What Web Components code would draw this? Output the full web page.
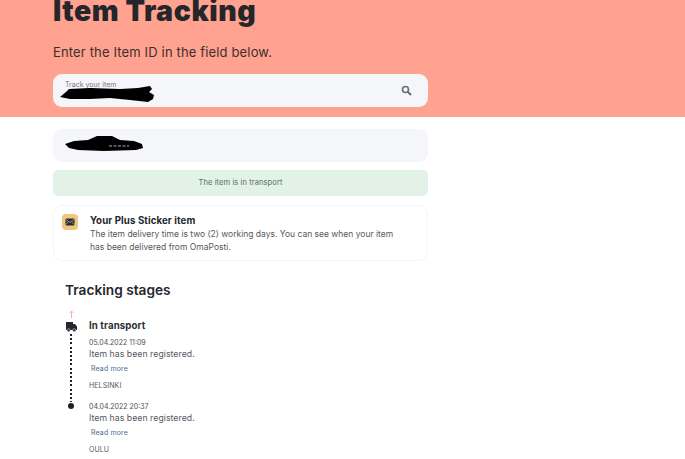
<!DOCTYPE html>
<html lang="en">
<head>
<meta charset="utf-8">
<title>Item Tracking</title>
<style>
  html, body { margin: 0; height: 459px; overflow: hidden; background: #fff; }
  body { font-family: Inter, "Liberation Sans", sans-serif; color: #22252b; }
</style>
</head>
<body>
<track-hero>
  <span slot="title">Item Tracking</span>
  <span slot="lead">Enter the Item ID in the field below.</span>
  <search-field label="Track your item"></search-field>
</track-hero>
<page-column>
  <id-card></id-card>
  <status-banner>The item is in transport</status-banner>
  <info-card heading="Your Plus Sticker item">The item delivery time is two (2) working days. You can see when your item has been delivered from OmaPosti.</info-card>
  <tracking-stages heading="Tracking stages">
    <tracking-stage current status="In transport" date="05.04.2022 11:09" place="HELSINKI">Item has been registered.</tracking-stage>
    <tracking-stage date="04.04.2022 20:37" place="OULU">Item has been registered.</tracking-stage>
  </tracking-stages>
</page-column>

<script>
// hero bar at the top, the title sits right under the window edge
class TrackHero extends HTMLElement {
  constructor() {
    super();
    this.attachShadow({ mode: 'open' }).innerHTML = `
      <style>
        :host { display: block; background: #ffa28f; height: 117px; overflow: hidden; padding: 0 53px; box-sizing: border-box; }
        .title { margin: 0; font: 900 28.5px/22px Inter, sans-serif; color: #25262b; letter-spacing: .55px; }
        .lead { margin: 21px 0 0; font: 400 13px/18px Inter, sans-serif; color: #3b2f2e; letter-spacing: .15px; }
        .box { margin-top: 13px; width: 375px; }
      </style>
      <h1 class="title"><slot name="title"></slot></h1>
      <p class="lead"><slot name="lead"></slot></p>
      <div class="box"><slot></slot></div>`;
  }
}

// search field with the blacked out value
class SearchField extends HTMLElement {
  constructor() {
    super();
    this.attachShadow({ mode: 'open' }).innerHTML = `
      <style>
        :host { display: flex; align-items: center; justify-content: flex-end; position: relative; height: 33px; background: #f5f6f9; border-radius: 9px; padding-right: 16px; box-sizing: border-box; }
        .label { position: absolute; left: 12px; top: 6px; font: 400 7px/9px Inter, sans-serif; color: #77787c; }
        .mark { position: absolute; left: 7px; top: 11px; }
      </style>
      <span class="label">${this.getAttribute('label')}</span>
      <svg class="mark" width="95" height="18" viewBox="0 0 95 18"><path fill="#000" d="M0 12 6 7 9 4 30 3 60 4 78 3 90 1 92 4 89 7 94 10 93 14 88 17 70 15 50 13 30 14 10 14Z"/></svg>
      <svg width="11" height="11" viewBox="0 0 11 11" fill="none" stroke="#666b75"><circle cx="4.5" cy="4.5" r="3" stroke-width="1.6"/><path d="M7 7l3 3" stroke-width="2"/></svg>`;
  }
}

class PageColumn extends HTMLElement {
  constructor() {
    super();
    this.attachShadow({ mode: 'open' }).innerHTML = `
      <style>
        :host { display: flex; flex-direction: column; width: 375px; margin: 12px 0 0 53px; }
      </style>
      <slot></slot>`;
  }
}

class IdCard extends HTMLElement {
  constructor() {
    super();
    this.attachShadow({ mode: 'open' }).innerHTML = `
      <style>
        :host { display: block; position: relative; height: 33px; background: #f5f6f9; border-radius: 9px; }
        svg { position: absolute; left: 11px; top: 5px; }
      </style>
      <svg width="80" height="18" viewBox="0 0 80 18"><path fill="#000" d="M1 10 10 7 24 6 33 2 48 2 56 6 70 7 78 10 79 14 72 16 40 17 14 16 5 14Z"/><path stroke="#fff" stroke-width=".7" stroke-dasharray="3 1.5" d="M45 12H65"/></svg>`;
  }
}

class StatusBanner extends HTMLElement {
  constructor() {
    super();
    this.attachShadow({ mode: 'open' }).innerHTML = `
      <style>
        :host { display: flex; align-items: center; justify-content: center; height: 26px; margin-top: 8px; background: #e2f2e6; border-radius: 5px; font: 400 7.5px/10px Inter, sans-serif; color: #4f6e60; letter-spacing: .1px; }
      </style>
      <slot></slot>`;
  }
}

class InfoCard extends HTMLElement {
  constructor() {
    super();
    this.attachShadow({ mode: 'open' }).innerHTML = `
      <style>
        :host { display: flex; gap: 12px; height: 56px; margin-top: 9px; padding: 8px 8px 0; box-sizing: border-box; border: 1px solid #f6f6f8; border-radius: 9px; }
        .icon { flex: none; display: flex; align-items: center; justify-content: center; width: 16px; height: 16px; background: #f1c77f; border-radius: 4px; }
        h3 { margin: 0 0 1px; font: 700 9.7px/13px Inter, sans-serif; color: #25272c; letter-spacing: .1px; }
        p { margin: 0; width: 312px; font: 400 8.5px/12.5px Inter, sans-serif; color: #55585e; }
      </style>
      <div class="icon">
        <svg width="10" height="8" viewBox="0 0 10 8"><rect x=".5" y=".5" width="9" height="7" rx="1" fill="#2b2d35"/><path d="M1 1.5 5 4.5 9 1.5M1 6.5 3.5 3.5M9 6.5 6.5 3.5" fill="none" stroke="#d9c8a4" stroke-width=".6"/></svg>
      </div>
      <div>
        <h3>${this.getAttribute('heading')}</h3>
        <p><slot></slot></p>
      </div>`;
  }
}

class TrackingStages extends HTMLElement {
  constructor() {
    super();
    this.attachShadow({ mode: 'open' }).innerHTML = `
      <style>
        :host { display: block; padding: 20px 0 0 12px; }
        h2 { margin: 0 0 13px; font: 600 13.7px/18px Inter, sans-serif; color: #25272c; }
      </style>
      <h2>${this.getAttribute('heading')}</h2>
      <slot></slot>`;
  }
}

// one row of the timeline, the first one has the truck and the status
class TrackingStage extends HTMLElement {
  constructor() {
    super();
    const current = this.hasAttribute('current');
    const status = this.getAttribute('status');
    this.attachShadow({ mode: 'open' }).innerHTML = `
      <style>
        :host { display: grid; grid-template-columns: 12px 1fr; column-gap: 12px; }
        .rail { display: flex; flex-direction: column; align-items: center; }
        .arrow { display: block; margin: -2px 0 4px; }
        .truck { display: block; }
        .line { flex: 1; margin-top: 2px; width: 2px; background: repeating-linear-gradient(#1d1f25 0 2px, transparent 2px 4.2px); }
        .dot { width: 6px; height: 6px; margin-top: 1px; border-radius: 50%; background: #1d1f25; }
        .status { margin: 7px 0 5px; font: 700 9.7px/14px Inter, sans-serif; color: #2c3038; letter-spacing: .1px; }
        .date { font: 400 7px/9px Inter, sans-serif; color: #4c4f55; }
        .msg { margin-top: 1px; font: 400 8.7px/12px Inter, sans-serif; color: #55585e; letter-spacing: .05px; }
        a { display: block; margin: 3.5px 0 0 2px; font: 400 7px/10px Inter, sans-serif; color: #4d6a8e; letter-spacing: .15px; }
        .place { margin-top: 7.5px; font: 400 7px/9px Inter, sans-serif; color: #55585e; letter-spacing: .1px; }
        .body { padding-bottom: 12px; }
      </style>
      <div class="rail">
        ${current ? `
          <svg class="arrow" width="5" height="8" viewBox="0 0 5 8"><path d="M2.5 8V1M.5 3 2.5 1 4.5 3" fill="none" stroke="#f4b0a5"/></svg>
          <svg class="truck" width="11" height="10" viewBox="0 0 11 10"><path fill="#25272e" d="M0 0h7v2h2l2 2.5V8H0Z"/><circle cx="2.6" cy="8.2" r="1.5" fill="#25272e" stroke="#fff" stroke-width=".5"/><circle cx="8.2" cy="8.2" r="1.5" fill="#25272e" stroke="#fff" stroke-width=".5"/></svg>
          <div class="line"></div>` : `<div class="dot"></div>`}
      </div>
      <div class="body">
        ${status ? `<div class="status">${status}</div>` : ''}
        <div class="date">${this.getAttribute('date')}</div>
        <div class="msg"><slot></slot></div>
        <a>Read more</a>
        <div class="place">${this.getAttribute('place')}</div>
      </div>`;
  }
}

customElements.define('track-hero', TrackHero);
customElements.define('search-field', SearchField);
customElements.define('page-column', PageColumn);
customElements.define('id-card', IdCard);
customElements.define('status-banner', StatusBanner);
customElements.define('info-card', InfoCard);
customElements.define('tracking-stages', TrackingStages);
customElements.define('tracking-stage', TrackingStage);
</script>
</body>
</html>
